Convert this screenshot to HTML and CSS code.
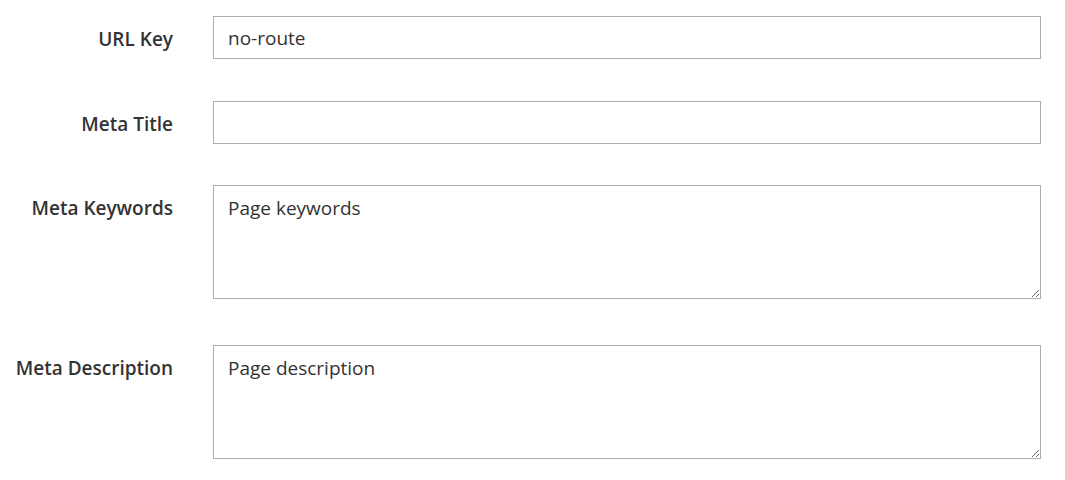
FILE: index.html
```html
<!DOCTYPE html>
<html lang="en">
<head>
<meta charset="utf-8">
<title>Search Engine Optimization</title>
<link rel="stylesheet" href="styles.css">
</head>
<body>
<form class="form">
  <div class="row row-first">
    <label class="label" for="url-key">URL Key</label>
    <input class="control input" id="url-key" type="text" value="no-route">
  </div>
  <div class="row">
    <label class="label" for="meta-title">Meta Title</label>
    <input class="control input" id="meta-title" type="text" value="">
  </div>
  <div class="row row-area">
    <label class="label" for="meta-keywords">Meta Keywords</label>
    <textarea class="control area" id="meta-keywords">Page keywords</textarea>
  </div>
  <div class="row row-last">
    <label class="label" for="meta-description">Meta Description</label>
    <textarea class="control area" id="meta-description">Page description</textarea>
  </div>
</form>
</body>
</html>
```
FILE: styles.css
```css
html, body {
  margin: 0;
  padding: 0;
  background: #ffffff;
}
body {
  font-family: "Open Sans", "Liberation Sans", sans-serif;
  color: #303030;
}
.form {
  display: flex;
  flex-direction: column;
  padding-top: 16px;
}
.row {
  display: flex;
  align-items: flex-start;
  gap: 40px;
  margin-bottom: 41px;
}
.row-first {
  margin-bottom: 42px;
}
.row-area {
  margin-bottom: 46px;
}
.row-last {
  margin-bottom: 0;
}
.label {
  width: 173px;
  flex: none;
  text-align: right;
  font-size: 19px;
  font-weight: 600;
  line-height: 24px;
  padding-top: 11px;
  color: #333333;
}
.control {
  box-sizing: border-box;
  width: 828px;
  flex: none;
  margin: 0;
  border: 1px solid #adadad;
  border-radius: 0;
  background: #ffffff;
  font-family: "Open Sans", "Liberation Sans", sans-serif;
  font-size: 19px;
  color: #333333;
  padding: 0 14px;
  outline: none;
}
.input {
  height: 43px;
  line-height: 24px;
}
.area {
  height: 114px;
  line-height: 24px;
  padding-top: 10px;
  resize: vertical;
  display: block;
}
```
